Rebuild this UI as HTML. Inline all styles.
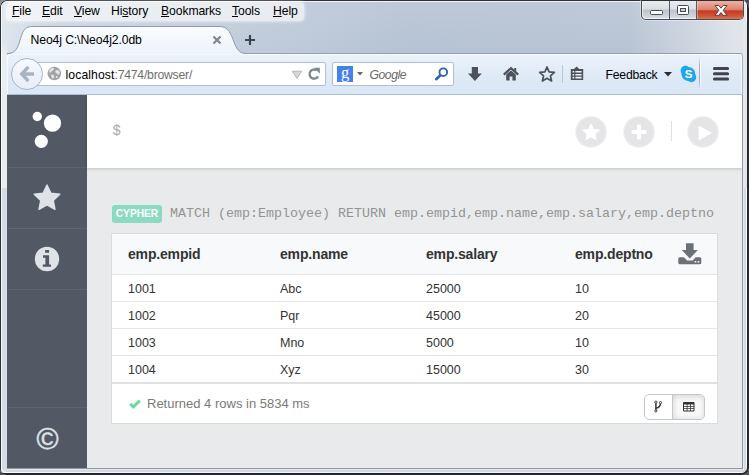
<!DOCTYPE html>
<html><head><meta charset="utf-8">
<style>
*{box-sizing:border-box;margin:0;padding:0}
html,body{width:749px;height:475px;overflow:hidden;background:#4a4d52}
body{font-family:"Liberation Sans",sans-serif;position:relative}
.abs{position:absolute}
#win{position:absolute;left:0;top:0;width:749px;height:475px;box-shadow:inset 1px 1px 0 0 #2d3036,inset -2px -2px 0 0 #24272c;border-radius:7px 8px 7px 6px;
 background:linear-gradient(rgba(255,255,255,.1),rgba(255,255,255,0) 52px),linear-gradient(90deg,#e0e6ed 0,#d6dee8 3%,#cad4e1 8%,#c1cddc 30%,#b6c3d4 55%,#b8c4d4 84%,#cfd6e0 93%,#dfe4ea 98%,#dee3e9 100%);}
#win:before{content:"";position:absolute;left:1px;top:1px;right:2px;bottom:2px;border:1px solid rgba(255,255,255,.8);border-radius:6px 6px 5px 5px}
#frame{left:2px;top:188px;width:744px;height:284px;background:#d4dbe4;border-radius:0 0 5px 5px}
#menubar{left:6px;top:2px;width:298px;height:19px;background:rgba(255,255,255,.62);border-radius:4px;box-shadow:0 0 3px 1px rgba(255,255,255,.5)}
.mi{position:absolute;top:2px;font-size:12.2px;color:#000;white-space:nowrap;letter-spacing:-.1px}
.mi u{text-decoration:underline;text-underline-offset:1px}
#tab{left:18px;top:27px;width:220px;height:27px}
#navbar{left:6px;top:53px;width:737px;height:42px;background:linear-gradient(#ebf2fb,#dce8f6 70%,#dae7f6);border:1px solid #a4b3c6;border-top-color:#93a0b3;border-bottom:1px solid #a9bcd2;border-radius:3px 3px 0 0;box-shadow:inset 1px 1px 0 rgba(255,255,255,.8),inset -1px 0 0 rgba(255,255,255,.8)}
#urlbar{left:30px;top:62px;width:296px;height:24px;background:#fff;border:1px solid #b4bfcd;border-radius:2px}
#search{left:332px;top:62px;width:122px;height:24px;background:#fff;border:1px solid #b4bfcd;border-radius:2px}
#back{left:11px;top:58px;width:32px;height:32px;border-radius:50%;background:linear-gradient(#f7fafe,#e6eef9);border:1px solid #a6b5c8}
#content{left:7px;top:95px;width:735px;height:373px;background:#e9eaeb;overflow:hidden}
#side{left:0;top:0;width:80px;height:373px;background:#525965}
#editor{left:80px;top:0;width:655px;height:73px;background:#fff;box-shadow:0 1px 3px rgba(0,0,0,.18)}
.cbtn{position:absolute;top:22px;width:30px;height:30px;border-radius:50%;background:#e5e5e7;box-shadow:0 0 0 1px #f4f4f5}
.sep{position:absolute;left:0;width:80px;height:1px;background:#5e6571}
#card{left:104px;top:138px;width:607px;height:191px;background:#fff;border:1px solid #d8dbe1}
.hrow{position:absolute;left:0;top:0;width:605px;height:41px;background:#f8f9fa;border-bottom:1px solid #e4e5e6;box-shadow:inset 0 1px 0 #fff}
.row{position:absolute;left:0;width:605px;height:27px;border-bottom:1px solid #e6e7e8}
.th{position:absolute;top:12px;font-size:14px;font-weight:bold;color:#333;white-space:nowrap;letter-spacing:-.17px}
.td{position:absolute;top:7px;font-size:12.5px;color:#333;white-space:nowrap}
</style></head><body>
<div class="abs" style="left:0;top:0;width:5px;height:5px;background:#8a8d91"></div>
<div id="win">
 <div id="menubar" class="abs">
  <span class="mi" style="left:6px"><u>F</u>ile</span>
  <span class="mi" style="left:36px"><u>E</u>dit</span>
  <span class="mi" style="left:68px"><u>V</u>iew</span>
  <span class="mi" style="left:105px">Hi<u>s</u>tory</span>
  <span class="mi" style="left:155px"><u>B</u>ookmarks</span>
  <span class="mi" style="left:226px"><u>T</u>ools</span>
  <span class="mi" style="left:267px"><u>H</u>elp</span>
 </div>
 <!-- window buttons -->
 <div class="abs" style="left:641px;top:0;width:103px;height:20px;border:1px solid #484d56;border-top:1px solid #2d3036;border-radius:0 0 5px 5px;overflow:hidden;background:linear-gradient(#e9ecf0 0,#dadfe5 45%,#bdc4ce 50%,#d3d8df 90%,#e3e6ea 100%);box-shadow:0 0 0 1px rgba(255,255,255,.35)">
   <div class="abs" style="left:0;top:0;width:101px;height:18px;border:1px solid rgba(255,255,255,.55);border-top:none;border-radius:0 0 4px 4px"></div>
   <div class="abs" style="left:27px;top:0;width:1px;height:20px;background:#545a64"></div>
   <div class="abs" style="left:54px;top:0;width:48px;height:20px;background:linear-gradient(#eeb1a3 0,#de8570 42%,#c43a22 50%,#d15437 75%,#e08a68 100%);border-left:1px solid #545a64;box-shadow:inset 1px 0 0 rgba(255,255,255,.35),inset -1px -1px 0 rgba(255,255,255,.3)"></div>
   <div class="abs" style="left:8px;top:9px;width:13px;height:5px;border:1px solid #474d57;background:#fff;border-radius:1.500px"></div>
   <div class="abs" style="left:35px;top:4px;width:12px;height:10px;border:1px solid #474d57;background:#fff;border-radius:1.500px"></div>
   <div class="abs" style="left:38px;top:7px;width:6px;height:4px;border:1px solid #474d57;background:#c9d0d9"></div>
   <svg class="abs" style="left:71px;top:3px" width="16" height="13" viewBox="0 0 16 13"><path d="M2 1.500 L5.800 1.500 L8 4.200 L10.200 1.500 L14 1.500 L10.100 6.300 L14 11.300 L10.200 11.300 L8 8.500 L5.800 11.300 L2 11.300 L5.900 6.300 Z" fill="#fff" stroke="#54403f" stroke-width="1" stroke-linejoin="round"/></svg>
 </div>
 <!-- tab -->
 <div id="navbar" class="abs"></div>
 <svg class="abs" style="left:0;top:20px" width="262" height="36" viewBox="0 0 262 36">
  <defs><linearGradient id="tg" x1="0" y1="0" x2="0" y2="1"><stop offset="0" stop-color="#fbfcfe"/><stop offset="1" stop-color="#ecf3fb"/></linearGradient></defs>
  <path d="M7 34.500 C14 33.500 17 30 19.500 22 C22.500 12 24 6.500 32 6.500 H219 C227 6.500 229.500 11 232.500 18 C235.500 26.500 238 33.500 246 33.500 L246 34.500 Z" fill="url(#tg)"/>
  <path d="M7 33.500 C14 33.500 17 30 19.500 22 C22.500 12 24 6.500 32 6.500 H219 C227 6.500 229.500 11 232.500 18 C235.500 26.500 238 33.500 246 33.500" fill="none" stroke="#8f9cae" stroke-width="1"/>
 </svg>
 <div class="abs" style="left:30.500px;top:33px;font-size:12.200px;color:#000;letter-spacing:-.1px;white-space:nowrap">Neo4j C:\Neo4j2.0db</div>
 <svg class="abs" style="left:212px;top:35px" width="10" height="10" viewBox="0 0 10 10"><path d="M1.500 1.500 L8.500 8.500 M8.500 1.500 L1.500 8.500" stroke="#80868e" stroke-width="2.200"/></svg>
 <svg class="abs" style="left:244px;top:34px" width="12" height="12" viewBox="0 0 12 12"><path d="M6 1 V11 M1 6 H11" stroke="#3d444f" stroke-width="2.200"/></svg>
 <div id="urlbar" class="abs"></div>
 <div id="back" class="abs"></div>
 <svg class="abs" style="left:19px;top:65px" width="16" height="18" viewBox="0 0 16 18"><path d="M9.400 1.900 L2.800 9 L9.400 16.100 M3.400 9 H15" fill="none" stroke="#a9b4c2" stroke-width="3.500" stroke-linejoin="miter"/></svg>
 <svg class="abs" style="left:47px;top:66px" width="15" height="15" viewBox="0 0 15 15"><circle cx="7.3" cy="7.5" r="6.8" fill="#a3a4a6"/><path d="M4.5 2.2 C6 1.6 7.5 2.3 7 3.6 C6.4 5 4.6 5.2 3.4 6.4 C2.8 7 2 6.4 2.2 5.2 C2.5 3.8 3.4 2.8 4.5 2.2 Z M8.8 4.4 C10.3 3.6 12.4 4.6 12.6 6.4 C12.8 8 12 9.2 10.8 8.6 C9.8 8 9.8 7 8.8 6.6 C8 6.2 8 4.9 8.8 4.4 Z M4.4 8.6 C5.6 8.2 7 9 7.2 10.2 C7.4 11.6 6.6 12.8 5.6 12.4 C4.4 12 3.6 9.2 4.4 8.6 Z M9.2 10.2 C10 9.8 11 10.4 10.6 11.4 C10.2 12.2 9.2 12.4 8.8 11.6 C8.6 11 8.8 10.4 9.2 10.2 Z" fill="#e3e4e6"/></svg>
 <div class="abs" style="left:65.5px;top:68px;font-size:12.2px;white-space:nowrap;color:#000;letter-spacing:.1px">localhost<span style="color:#6e6e6e;letter-spacing:-.22px">:7474/browser/</span></div>
 <svg class="abs" style="left:291px;top:70px" width="12" height="10" viewBox="0 0 12 10"><path d="M1.3 1.2 H10.7 L6 8.4 Z" fill="#d3d6da" stroke="#b3b7bd" stroke-width="1"/></svg>
 <svg class="abs" style="left:307px;top:67px" width="14" height="14" viewBox="0 0 14 14"><path d="M11 9.400 A4.500 4.500 0 1 1 9.600 3.400" fill="none" stroke="#7c8792" stroke-width="2.300"/><path d="M6.800 0.800 H12.800 V6.800 Z" fill="#7c8792"/></svg>
 <div id="search" class="abs"></div>
 <div class="abs" style="left:337px;top:66px;width:16px;height:16px;background:#4382ea"></div>
 <div class="abs" style="left:337px;top:64.500px;width:16px;height:16px;color:#fff;font:16.500px/16px 'Liberation Serif',serif;text-align:center">g</div>
 <svg class="abs" style="left:357px;top:72px" width="6" height="4" viewBox="0 0 6 4"><path d="M0 0 H6 L3 3.6 Z" fill="#666"/></svg>
 <div class="abs" style="left:369.5px;top:68px;font-size:12.2px;font-style:italic;color:#6a6a6a;letter-spacing:-.45px">Google</div>
 <svg class="abs" style="left:434px;top:66px" width="16" height="16" viewBox="0 0 16 16"><circle cx="9.3" cy="6.2" r="3.8" fill="#fff" stroke="#2f62b0" stroke-width="1.9"/><path d="M6.4 9.2 L2.2 13.2" stroke="#2f62b0" stroke-width="2.6" stroke-linecap="round"/></svg>
 <!-- toolbar icons -->
 <svg class="abs" style="left:467px;top:66px" width="16" height="16" viewBox="0 0 16 16"><path d="M4.8 1 H11 V7.4 H14.8 L7.9 15 L1 7.4 H4.8 Z" fill="#4b525c"/></svg>
 <svg class="abs" style="left:502px;top:66px" width="18" height="16" viewBox="0 0 18 16"><path d="M1.8 8.6 L9 2.2 L16.2 8.6" fill="none" stroke="#4b525c" stroke-width="2.2"/><path d="M4.2 8.6 L9 4.4 L13.8 8.6 V14.6 H10.4 V10.4 H7.6 V14.6 H4.2 Z" fill="#4b525c"/><path d="M12.2 2 H14.2 V5.4 L12.2 3.8 Z" fill="#4b525c"/></svg>
 <svg class="abs" style="left:538px;top:65px" width="18" height="18" viewBox="0 0 18 18"><path d="M9 2 L11.1 6.8 L16.4 7.3 L12.4 10.8 L13.6 16 L9 13.3 L4.4 16 L5.6 10.8 L1.6 7.3 L6.9 6.8 Z" fill="none" stroke="#4b525c" stroke-width="1.7" stroke-linejoin="round"/></svg>
 <div class="abs" style="left:562px;top:65px;width:1px;height:18px;background:#bcc5d1"></div>
 <svg class="abs" style="left:569px;top:65px" width="16" height="18" viewBox="0 0 16 18"><path d="M1.8 4 H5 L7.6 1.6 L10.2 4 H14.2 V15 H1.8 Z" fill="#4b525c"/><path d="M3.6 6 H5.2 V7.6 H3.6 Z M6.4 6 H12.6 V7.6 H6.4 Z M3.6 8.9 H5.2 V10.5 H3.6 Z M6.4 8.9 H12.6 V10.5 H6.4 Z M3.6 11.8 H5.2 V13.4 H3.6 Z M6.4 11.8 H12.6 V13.4 H6.4 Z" fill="#eef3fa"/></svg>
 <div class="abs" style="left:605.5px;top:68px;font-size:12.2px;color:#000;white-space:nowrap;letter-spacing:-.2px">Feedback</div>
 <svg class="abs" style="left:664px;top:72px" width="8" height="5" viewBox="0 0 8 5"><path d="M0 0 H8 L4 4.6 Z" fill="#2a2d31"/></svg>
 <svg class="abs" style="left:680px;top:65px" width="17" height="18" viewBox="0 0 17 18"><circle cx="5.4" cy="5.6" r="4.8" fill="#1ea7ea"/><circle cx="11.4" cy="12.4" r="4.8" fill="#1ea7ea"/><circle cx="8.4" cy="9" r="6.9" fill="#1ea7ea"/></svg>
 <div class="abs" style="left:680px;top:66px;width:17px;height:16px;color:#fff;font:bold 11.5px/16px 'Liberation Sans',sans-serif;text-align:center">S</div>
 <div class="abs" style="left:699px;top:56px;width:1px;height:34px;background:linear-gradient(rgba(160,174,192,0),#a3b0c2 30%,#a3b0c2 70%,rgba(160,174,192,0))"></div>
 <div class="abs" style="left:700px;top:56px;width:1px;height:34px;background:linear-gradient(rgba(255,255,255,0),rgba(255,255,255,.8) 30%,rgba(255,255,255,.8) 70%,rgba(255,255,255,0))"></div>
 <svg class="abs" style="left:712px;top:66px" width="18" height="16" viewBox="0 0 18 16"><path d="M2.4 2.6 H15.6 M2.4 7.8 H15.6 M2.4 13 H15.6" stroke="#3f454e" stroke-width="3" stroke-linecap="round"/></svg>

 <div id="frame" class="abs"></div>
 <div class="abs" style="left:2px;top:40px;width:5px;height:148px;background:linear-gradient(rgba(233,237,242,0),#e9edf2 14px)"></div>
 <div class="abs" style="left:743px;top:21px;width:4px;height:167px;background:#e3e7ec"></div>
 <div class="abs" style="left:742px;top:95px;width:1px;height:374px;background:#8e98a5"></div>
 <div class="abs" style="left:7px;top:468px;width:736px;height:1px;background:#8e98a5"></div>
 <div class="abs" style="left:743px;top:95px;width:1px;height:375px;background:#e6eaef"></div>
 <div class="abs" style="left:7px;top:469px;width:737px;height:1px;background:#e6eaef"></div>
 <div id="content" class="abs">
  <div id="side" class="abs">
   <div class="sep" style="top:72px"></div>
   <div class="sep" style="top:133px"></div>
   <div class="sep" style="top:194px"></div>
   <div class="sep" style="top:312px"></div>
   <svg class="abs" style="left:22px;top:15px" width="40" height="40" viewBox="0 0 40 40"><circle cx="8.3" cy="6.5" r="4.7" fill="#fff"/><circle cx="23.5" cy="13.2" r="8.6" fill="#fff"/><circle cx="12.3" cy="31.3" r="6.6" fill="#fff"/></svg>
   <svg class="abs" style="left:25px;top:87.5px" width="30" height="28" viewBox="0 0 30 28"><path d="M15 2 L18.9 10.200 L27.800 11.300 L21.300 17.600 L23 26.300 L15 22 L7 26.300 L8.700 17.600 L2.200 11.300 L11.100 10.200 Z" fill="#dfe3e8" stroke="#dfe3e8" stroke-width="1.400" stroke-linejoin="round"/></svg>
   <svg class="abs" style="left:27px;top:151px" width="26" height="26" viewBox="0 0 26 26"><circle cx="13" cy="13" r="12.200" fill="#dfe2e7"/><path d="M11.100 4.100 H15.100 V6.800 H11.100 Z M9 9.200 H15.100 V18.400 H17 V20.800 H8.800 V18.400 H11.400 V11.700 H9 Z" fill="#525866"/></svg>
   <div class="abs" style="left:20.5px;top:327px;width:40px;height:34px;text-align:center;font:30px/34px 'Liberation Sans',sans-serif;color:#dfe2e7;-webkit-text-stroke:.5px #dfe2e7">©</div>
  </div>
  <div id="editor" class="abs">
   <div class="abs" style="left:25.5px;top:27.5px;font:14px 'Liberation Mono',monospace;color:#a8a8a8">$</div>
   <div class="cbtn" style="left:489px"></div>
   <svg class="abs" style="left:494px;top:26.5px" width="20" height="20" viewBox="0 0 20 20"><path d="M10 1 L12.8 6.9 L19.3 7.7 L14.5 12.2 L15.7 18.6 L10 15.5 L4.3 18.6 L5.5 12.2 L0.7 7.700 L7.2 6.9 Z" fill="#fff"/></svg>
   <div class="cbtn" style="left:537px"></div>
   <svg class="abs" style="left:544px;top:29px" width="16" height="16" viewBox="0 0 16 16"><path d="M8 0.600 V15.4 M0.600 8 H15.4" stroke="#fff" stroke-width="3.9"/></svg>
   <div class="abs" style="left:584px;top:26px;width:1px;height:20px;background:#dcdee8"></div>
   <div class="cbtn" style="left:601px"></div>
   <svg class="abs" style="left:610px;top:29px" width="16" height="18" viewBox="0 0 16 18"><path d="M1.600 1.400 L15 9 L1.600 16.600 Z" fill="#fff"/></svg>
  </div>
  <div class="abs" style="left:105px;top:110px;width:50px;height:17.5px;background:#8bdac2;border-radius:3px;color:#fff;font-size:10.2px;font-weight:bold;text-align:center;line-height:17.5px">CYPHER</div>
  <div class="abs" style="left:163px;top:110px;font:13px/17px 'Liberation Mono',monospace;color:#939393;white-space:nowrap;letter-spacing:0;font-size:13.33px">MATCH (emp:Employee) RETURN emp.empid,emp.name,emp.salary,emp.deptno</div>
  <div id="card" class="abs">
   <div class="hrow">
    <span class="th" style="left:16px">emp.empid</span>
    <span class="th" style="left:168px">emp.name</span>
    <span class="th" style="left:314px">emp.salary</span>
    <span class="th" style="left:463px">emp.deptno</span>
    <svg class="abs" style="left:566px;top:9px" width="24" height="22" viewBox="0 0 24 22"><path d="M8 0.300 H15.600 V7 H19.800 L11.800 15.600 L3.800 7 H8 Z" fill="#6c7077"/><path d="M1.800 14.300 H6 L9 17.600 H14.600 L17.600 14.300 H21.800 Q23.300 14.300 23.300 15.800 V19.700 Q23.300 21.200 21.800 21.200 H1.800 Q0.300 21.200 0.300 19.700 V15.800 Q0.300 14.300 1.800 14.300 Z" fill="#6c7077"/><rect x="16.600" y="18" width="1.700" height="1.500" fill="#f8f9fa"/><rect x="19.600" y="18" width="1.700" height="1.500" fill="#f8f9fa"/></svg>
   </div>
   <div class="row" style="top:41px"><span class="td" style="left:16px">1001</span><span class="td" style="left:168px">Abc</span><span class="td" style="left:314px">25000</span><span class="td" style="left:463px">10</span></div>
   <div class="row" style="top:68px"><span class="td" style="left:16px">1002</span><span class="td" style="left:168px">Pqr</span><span class="td" style="left:314px">45000</span><span class="td" style="left:463px">20</span></div>
   <div class="row" style="top:95px"><span class="td" style="left:16px">1003</span><span class="td" style="left:168px">Mno</span><span class="td" style="left:314px">5000</span><span class="td" style="left:463px">10</span></div>
   <div class="row" style="top:122px;height:28px;border-bottom:2px solid #e0e1e3"><span class="td" style="left:16px">1004</span><span class="td" style="left:168px">Xyz</span><span class="td" style="left:314px">15000</span><span class="td" style="left:463px">30</span></div>
   <svg class="abs" style="left:16px;top:164px" width="14" height="12" viewBox="0 0 14 12"><path d="M2.200 5.700 L5.300 8.900 L11.800 2.600" fill="none" stroke="#68dba0" stroke-width="2.900"/></svg>
   <div class="abs" style="left:35px;top:161.5px;font-size:13px;color:#7a7a7a;white-space:nowrap">Returned 4 rows in 5834 ms</div>
   <div class="abs" style="left:532px;top:160px;width:61px;height:26px;border:1px solid #c6c7c9;border-radius:5px;background:#fff;overflow:hidden">
     <div class="abs" style="left:27px;top:0;width:33px;height:24px;background:#f9f9f9;border-left:1px solid #c6c7c9;box-shadow:inset 0 1px 6px rgba(0,0,0,.17)"></div>
   </div>
   <svg class="abs" style="left:541px;top:166px" width="11" height="13" viewBox="0 0 11 13"><path d="M2.900 2.600 V10.600 M2.900 8.300 C6.400 7.600 7.500 6.200 7.500 2.900" fill="none" stroke="#333" stroke-width="1.500"/><circle cx="2.900" cy="2.200" r="1.100" fill="#fff" stroke="#333" stroke-width=".9"/><circle cx="2.900" cy="10.900" r="1.100" fill="#fff" stroke="#333" stroke-width=".9"/><circle cx="7.500" cy="2.600" r="1.100" fill="#fff" stroke="#333" stroke-width=".9"/></svg>
   <svg class="abs" style="left:571px;top:168px" width="12" height="10" viewBox="0 0 12 10"><rect x="0" y="0" width="11.500" height="9.400" rx=".8" fill="#333"/><path d="M1 2.400 H3.700 V4.100 H1 Z M4.500 2.400 H7.100 V4.100 H4.500 Z M7.900 2.400 H10.500 V4.100 H7.900 Z M1 4.800 H3.700 V6.300 H1 Z M4.500 4.800 H7.100 V6.300 H4.500 Z M7.900 4.800 H10.500 V6.300 H7.900 Z M1 7 H3.700 V8.500 H1 Z M4.500 7 H7.100 V8.500 H4.500 Z M7.900 7 H10.500 V8.500 H7.900 Z" fill="#fff"/></svg>
  </div>
 </div>
</div>
</body></html>
